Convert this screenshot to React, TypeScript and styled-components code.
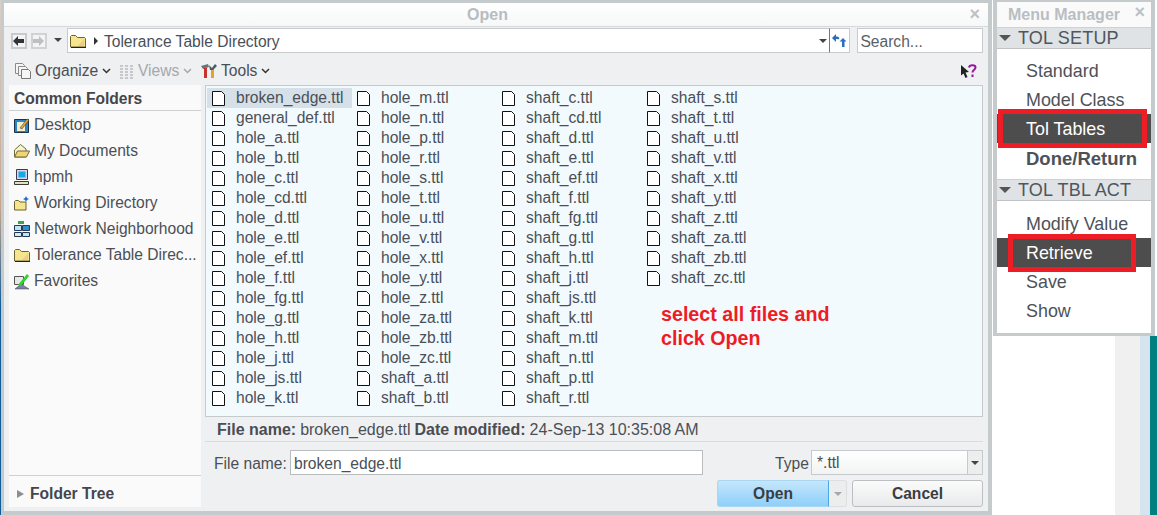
import React from "react";
import styled, { createGlobalStyle } from "styled-components";

const GlobalStyle = createGlobalStyle`
  html, body {
    margin: 0;
    padding: 0;
    background: #fff;
    overflow: hidden;
  }
  body {
    font-family: "Liberation Sans", Arial, sans-serif;
    font-size: 15.6px;
    color: #4a4f56;
  }
  * {
    box-sizing: border-box;
  }
`;

const Page = styled.div`
  display: flex;
  width: 1157px;
  height: 515px;
  overflow: hidden;
`;

const LeftEdge = styled.div`
  width: 1px;
  background: linear-gradient(180deg, #d8d0c8 0%, #c9a58a 40%, #0b5d9c 60%, #0b5d9c 100%);
`;

const Dialog = styled.div`
  display: flex;
  flex-direction: column;
  width: 991px;
  height: 515px;
  border: solid #c5cacd;
  border-width: 3px 4px 4px 3px;
  background: #eff0f2;
`;

const TitleBar = styled.div`
  position: relative;
  display: flex;
  justify-content: center;
  align-items: center;
  height: 24px;
  padding-right: 17px;
  flex: none;
  font-size: 16px;
  font-weight: bold;
  color: #b7bcc1;
  background: linear-gradient(180deg, #ffffff, #f6f7f7);
  border-bottom: 1px solid #d6d9db;
`;

const CloseMark = styled.span`
  position: absolute;
  right: 8px;
  top: 1px;
  font-size: 18px;
  font-weight: bold;
  color: #bcc1c5;
`;

const NavRow = styled.div`
  display: flex;
  align-items: center;
  height: 30px;
  flex: none;
  padding: 1px 5px 4px 7px;
`;

const NavButton = styled.div<{ $dim?: boolean }>`
  display: flex;
  align-items: center;
  justify-content: center;
  width: 16px;
  height: 16px;
  margin-right: 4px;
  background: #f4f4f4;
  border: 2px solid ${(p) => (p.$dim ? "#d0d3d5" : "#c8cbce")};
`;

const DropCaret = styled.div`
  width: 0;
  height: 0;
  border-left: 4px solid transparent;
  border-right: 4px solid transparent;
  border-top: 4px solid #444;
  margin: 0 5px 2px 3px;
`;

const AddressBar = styled.div`
  display: flex;
  align-items: center;
  width: 766px;
  height: 25px;
  padding-left: 2px;
  background: #fff;
  border: 1px solid #c8cbce;
  border-right: 1px solid #777;
`;

const Crumb = styled.span`
  margin-left: 6px;
  padding-top: 2px;
  color: #4a5058;
`;

const RightArrow = styled.div`
  width: 0;
  height: 0;
  margin-left: 8px;
  border-top: 4px solid transparent;
  border-bottom: 4px solid transparent;
  border-left: 4px solid #333;
`;

const AddressCaret = styled(DropCaret)`
  margin: 0 2px 0 auto;
`;

const RefreshButton = styled.div`
  display: flex;
  align-items: center;
  justify-content: center;
  width: 20px;
  height: 25px;
  background: #fff;
  border: 1px solid #c8cbce;
  border-left: none;
`;

const SearchBox = styled.div`
  display: flex;
  align-items: center;
  width: 126px;
  height: 25px;
  margin-left: 7px;
  padding: 2px 0 0 2px;
  background: #fff;
  border: 1px solid #c8cbce;
  color: #5a5f65;
`;

const Toolbar = styled.div`
  display: flex;
  align-items: center;
  height: 28px;
  flex: none;
  padding: 0 11px;
`;

const ToolItem = styled.div<{ $dim?: boolean; $width: number }>`
  display: flex;
  align-items: center;
  gap: 4px;
  width: ${(p) => p.$width}px;
  color: ${(p) => (p.$dim ? "#a4a8ac" : "#4a4f56")};
`;

const HelpSlot = styled.div`
  margin-left: auto;
  display: flex;
`;

const Body = styled.div`
  display: flex;
  gap: 4px;
  height: 422px;
  padding: 0 5px;
  flex: none;
`;

const Sidebar = styled.div`
  display: flex;
  flex-direction: column;
  width: 192px;
  background: #fafafa;
`;

const SidebarHead = styled.div`
  height: 26px;
  padding: 5px 0 0 5px;
  font-weight: bold;
  color: #43474c;
  border-bottom: 1px solid #cdd0d2;
`;

const Places = styled.div`
  display: flex;
  flex-direction: column;
  flex: 1;
  padding-top: 1px;
`;

const Place = styled.div`
  display: flex;
  align-items: center;
  height: 26px;
  gap: 4px;
  padding-left: 5px;
  white-space: nowrap;
`;

const TreeToggle = styled.div`
  display: flex;
  align-items: center;
  height: 32px;
  gap: 6px;
  padding: 4px 0 0 8px;
  font-weight: bold;
  color: #43474c;
  border-top: 1px solid #cdd0d2;
`;

const TreeArrow = styled.div`
  width: 0;
  height: 0;
  border-top: 4px solid transparent;
  border-bottom: 4px solid transparent;
  border-left: 7px solid #8c8f92;
`;

const Main = styled.div`
  display: flex;
  flex-direction: column;
  width: 778px;
`;

const FileList = styled.div`
  position: relative;
  display: grid;
  grid-auto-flow: column;
  grid-template-rows: repeat(16, 20px);
  grid-auto-columns: 145px;
  justify-content: start;
  align-content: start;
  height: 333px;
  padding: 2px 1px;
  background: #f3fafe;
  border: 1px solid #c5cacd;
`;

const FileRow = styled.div<{ $selected?: boolean }>`
  display: flex;
  align-items: center;
  gap: 11px;
  padding-left: 5px;
  height: 20px;
  white-space: nowrap;
  background: ${(p) => (p.$selected ? "#d5e0e8" : "transparent")};
`;

const Annotation = styled.div`
  position: absolute;
  left: 455px;
  top: 216px;
  font-size: 19.7px;
  font-weight: bold;
  line-height: 24px;
  color: #ee1c25;
`;

const InfoBar = styled.div`
  display: flex;
  align-items: center;
  height: 25px;
  padding: 2px 0 0 12px;
  gap: 4px;
  flex: none;
  font-size: 16px;
  border-bottom: 1px solid #d9dbdd;
`;

const InfoKey = styled.b`
  color: #4a4d52;
`;

const FormRow = styled.div`
  display: flex;
  align-items: center;
  height: 38px;
  padding: 3px 0 0 9px;
  flex: none;
`;

const FieldLabel = styled.span`
  width: 76px;
  padding-top: 3px;
  flex: none;
`;

const NameInput = styled.div`
  display: flex;
  align-items: center;
  width: 413px;
  height: 25px;
  padding: 2px 0 0 3px;
  background: #fff;
  border: 1px solid #b9bcbf;
`;

const TypeLabel = styled.span`
  margin-left: 72px;
  width: 36px;
  padding-top: 3px;
  flex: none;
`;

const TypeSelect = styled.div`
  display: flex;
  align-items: center;
  width: 172px;
  height: 25px;
  padding-left: 5px;
  background: linear-gradient(180deg, #ffffff, #f2f3f4);
  border: 1px solid #c5cacd;
`;

const SelectCaretCell = styled.div`
  display: flex;
  align-items: center;
  justify-content: center;
  width: 15px;
  height: 23px;
  margin-left: auto;
  border-left: 1px solid #c5cacd;
  background: #eceded;
`;

const TypeCaret = styled(DropCaret)`
  margin: 0;
`;

const ButtonRow = styled.div`
  display: flex;
  justify-content: flex-end;
  height: 27px;
  flex: none;
`;

const OpenButton = styled.div`
  display: flex;
  align-items: center;
  justify-content: center;
  width: 112px;
  font-weight: bold;
  color: #3a3d41;
  background: linear-gradient(180deg, #c5e6fb, #8ed0fa);
  border: 1px solid #a9d6f2;
  border-right: 1px solid #4aa7e3;
  border-radius: 3px 0 0 3px;
`;

const OpenCaretCell = styled.div`
  display: flex;
  align-items: center;
  justify-content: center;
  width: 18px;
  background: #eceded;
  border: 1px solid #dcdee0;
  border-left: none;
  border-radius: 0 3px 3px 0;
`;

const FaintCaret = styled(DropCaret)`
  margin: 0;
  border-top-color: #a5a8ab;
`;

const CancelButton = styled.div`
  display: flex;
  align-items: center;
  justify-content: center;
  width: 131px;
  margin-left: 5px;
  font-weight: bold;
  color: #3a3d41;
  background: linear-gradient(180deg, #fbfbfb, #e9eaeb);
  border: 1px solid #bcbfc2;
  border-radius: 3px;
`;

const RightColumn = styled.div`
  display: flex;
  flex-direction: column;
  width: 165px;
  padding-left: 1px;
`;

const Menu = styled.div`
  display: flex;
  flex-direction: column;
  width: 162px;
  height: 336px;
  flex: none;
  background: #f2f3f4;
  border: solid #c5cacd;
  border-width: 2px 4px 3px 4px;
`;

const MenuTitle = styled.div`
  position: relative;
  display: flex;
  align-items: center;
  height: 25px;
  flex: none;
  padding-left: 11px;
  font-size: 16px;
  font-weight: bold;
  color: #b9bec3;
  background: #fafafa;
`;

const MenuClose = styled(CloseMark)`
  right: 6px;
  top: 0;
`;

const MenuHead = styled.div`
  display: flex;
  align-items: center;
  gap: 7px;
  height: 22px;
  flex: none;
  padding-left: 2px;
  font-size: 18px;
  letter-spacing: 0.2px;
  color: #50565c;
  background: #dfe3e5;
  border-top: 1px solid #cfd2d4;
  border-bottom: 1px solid #bfc3c6;
`;

const HeadCaret = styled.div`
  width: 0;
  height: 0;
  border-left: 6px solid transparent;
  border-right: 6px solid transparent;
  border-top: 6px solid #555;
`;

const MenuGroup = styled.div<{ $height: number; $top: number }>`
  display: flex;
  flex-direction: column;
  height: ${(p) => p.$height}px;
  padding-top: ${(p) => p.$top}px;
  background: #fff;
  flex: none;
`;

const MenuItem = styled.div<{ $active?: boolean; $bold?: boolean }>`
  position: relative;
  display: flex;
  align-items: center;
  height: 29px;
  flex: none;
  padding: 2px 0 0 29px;
  font-size: ${(p) => (p.$bold ? "18.5px" : "17.9px")};
  font-weight: ${(p) => (p.$bold ? "bold" : "normal")};
  color: ${(p) => (p.$active ? "#fff" : "#4d5258")};
  background: ${(p) => (p.$active ? "#4d4d4d" : "transparent")};
`;

const RedBox = styled.div<{ $left: number; $width: number; $top: number; $height: number }>`
  position: absolute;
  left: ${(p) => p.$left}px;
  top: ${(p) => p.$top}px;
  width: ${(p) => p.$width}px;
  height: ${(p) => p.$height}px;
  border: 5px solid #ee1c25;
`;

const BehindMenu = styled.div`
  display: flex;
  flex: 1;
`;

const BehindWhite = styled.div`
  width: 122px;
  background: #fff;
`;

const BehindGrey = styled.div`
  width: 25px;
  background: #f0f0f0;
`;

const BehindBlue = styled.div`
  width: 10px;
  background: #d6e4f0;
`;

const BehindTeal = styled.div`
  flex: 1;
  background: #008080;
`;

const Doc = () => (
  <svg width="13" height="15" viewBox="0 0 13 15">
    <path d="M.5.5h9l3 3v11H.5z" fill="#fff" stroke="#111" />
  </svg>
);

const FolderIcon = () => (
  <svg width="16" height="14" viewBox="0 0 16 14">
    <path d="M.5 13V2.500l1-1h4l2 2h7l1 1V13z" fill="#f6e58f" stroke="#6b6430" />
    <path d="M8 12l6-7v7z" fill="#f3c98b" />
    <path d="M1 13.500h15" stroke="#222" />
  </svg>
);

const BackArrow = ({ color }: { color: string }) => (
  <svg width="11" height="10" viewBox="0 0 11 10">
    <path d="M0 5l5-5v3h6v4H5v3z" fill={color} />
  </svg>
);

const ForwardArrow = ({ color }: { color: string }) => (
  <svg width="11" height="10" viewBox="0 0 11 10">
    <path d="M11 5L6 0v3H0v4h6v3z" fill={color} />
  </svg>
);

const RefreshIcon = () => (
  <svg width="15" height="14" viewBox="0 0 15 14">
    <path d="M0 4l4-4v2.500c2 0 3 .5 3.500 2L6 5.500C5.500 5 5 5 4 5v3z" fill="#2a6fb8" />
    <path d="M14.500 7.500L11 4 7.500 7.500H10V13h2.500V7.500z" fill="#2a6fb8" />
  </svg>
);

const PagesIcon = () => (
  <svg width="16" height="16" viewBox="0 0 16 16">
    <path d="M.5.5h7l2 2v8h-9z" fill="#f5f5f5" stroke="#8a8a8a" />
    <path d="M3.500 3.500h7l2 2v7h-9z" fill="#f5f5f5" stroke="#8a8a8a" />
    <path d="M6.500 6.500h7l2 2v7h-9z" fill="#f5f5f5" stroke="#777" />
  </svg>
);

const ViewsIcon = () => (
  <svg width="15" height="15" viewBox="0 0 15 15">
    <path
      d="M1 2h3M6 2h3M11 2h3M1 5h3M6 5h3M11 5h3M1 8h3M6 8h3M11 8h3M1 11h3M6 11h3M11 11h3M1 14h3M6 14h3M11 14h3"
      stroke="#c6c9cb"
      strokeWidth="2"
    />
  </svg>
);

const ToolsIcon = () => (
  <svg width="16" height="16" viewBox="0 0 16 16">
    <path d="M0 3l7-2 1 3-6 2z" fill="#6c7378" />
    <path d="M3 5h3v10H3z" fill="#c9342a" />
    <path d="M10 6h3v9h-3z" fill="#e2a52b" />
    <path d="M8 2l3 3 3-4 2 2-4 4H9z" fill="#4a5a66" />
  </svg>
);

const Chevron = ({ color = "#333" }: { color?: string }) => (
  <svg width="9" height="6" viewBox="0 0 9 6">
    <path d="M1 1l3.500 3.500L8 1" fill="none" stroke={color} strokeWidth="1.500" />
  </svg>
);

const HelpIcon = () => (
  <svg width="16" height="15" viewBox="0 0 16 15">
    <path d="M0 1l8 7-3.500.5 2 4.500-2 1-2-4.500-2.500 2z" fill="#222" />
    <path d="M8 3.500C8.500.5 14.500.5 14.500 3.500c0 2.500-3 2-3 5" fill="none" stroke="#93159b" strokeWidth="2" />
    <path d="M10.500 10.500h2v2.500h-2z" fill="#93159b" />
  </svg>
);

const DesktopIcon = () => (
  <svg width="16" height="16" viewBox="0 0 16 16">
    <path d="M.5 2.500h14v13H.5z" fill="#2e86c1" stroke="#16324d" />
    <path d="M3 5h8v9H3z" fill="#f6efcb" />
    <path d="M6 11l7-9 2 1-7 9z" fill="#e9a23b" stroke="#333" strokeWidth=".5" />
  </svg>
);

const DocsIcon = () => (
  <svg width="16" height="14" viewBox="0 0 16 14">
    <path d="M.5 13V6l6-5.500L12 5v8z" fill="#f8f3d0" stroke="#6f6a3a" />
    <path d="M.5 13l3-6h12l-3 6z" fill="#f2d573" stroke="#6f6a3a" />
  </svg>
);

const ComputerIcon = () => (
  <svg width="16" height="17" viewBox="0 0 16 17">
    <path d="M2.500.5h11v10h-11z" fill="#d8d8e8" stroke="#3a3a55" />
    <path d="M4.500 2.500h7v6h-7z" fill="#1aa7e8" />
    <path d="M.5 12.500h14v3H.5z" fill="#e3dfc0" stroke="#3a3a35" />
  </svg>
);

const WorkingIcon = () => (
  <svg width="16" height="15" viewBox="0 0 16 15">
    <path d="M.5 14V5.500l1-1h3l1.500 1.500h6v8z" fill="#f6e58f" stroke="#6b6430" />
    <path d="M12 0l1 2 2 1-2 1-1 2-1-2-2-1 2-1z" fill="#1a6fc9" />
  </svg>
);

const NetworkIcon = () => (
  <svg width="16" height="16" viewBox="0 0 16 16">
    <path d="M4 0h6v3H4z" fill="#3fa34d" />
    <path d="M.5 4.500h7v5h-7z" fill="#bfe3f5" stroke="#223a55" />
    <path d="M8.500 4.500h7v5h-7z" fill="#2f8fd0" stroke="#223a55" />
    <path d="M.5 11.500h7v4h-7z" fill="#dfe7ee" stroke="#223a55" />
    <path d="M8.500 11.500h7v4h-7z" fill="#bfe3f5" stroke="#223a55" />
  </svg>
);

const FavoritesIcon = () => (
  <svg width="16" height="17" viewBox="0 0 16 17">
    <path d="M.5 3.500h9v8h-9z" fill="#e8e8e8" stroke="#555" />
    <path d="M1 16l6-5 8 5z" fill="#7d7fa8" stroke="#444" strokeWidth=".5" />
    <path d="M4 12L13 1l2 2-8 10z" fill="#2fd02f" />
  </svg>
);

const places = [
  { name: "Desktop", icon: <DesktopIcon /> },
  { name: "My Documents", icon: <DocsIcon /> },
  { name: "hpmh", icon: <ComputerIcon /> },
  { name: "Working Directory", icon: <WorkingIcon /> },
  { name: "Network Neighborhood", icon: <NetworkIcon /> },
  { name: "Tolerance Table Direc...", icon: <FolderIcon /> },
  { name: "Favorites", icon: <FavoritesIcon /> },
];

const fits = "a b c cd d e ef f fg g h j js k m n p r s t u v x y z za zb zc".split(" ");

const files = [
  "broken_edge.ttl",
  "general_def.ttl",
  ...fits.map((h) => `hole_${h}.ttl`),
  ...fits.map((s) => `shaft_${s}.ttl`),
];

const App = () => {
  return (
    <Page>
      <GlobalStyle />
      <LeftEdge />
      <Dialog>
        <TitleBar>
          Open
          <CloseMark>×</CloseMark>
        </TitleBar>
        <NavRow>
          <NavButton>
            <BackArrow color="#333" />
          </NavButton>
          <NavButton $dim>
            <ForwardArrow color="#bdbfc1" />
          </NavButton>
          <DropCaret />
          <AddressBar>
            <FolderIcon />
            <RightArrow />
            <Crumb>Tolerance Table Directory</Crumb>
            <AddressCaret />
          </AddressBar>
          <RefreshButton>
            <RefreshIcon />
          </RefreshButton>
          <SearchBox>Search...</SearchBox>
        </NavRow>
        <Toolbar>
          <ToolItem $width={104}>
            <PagesIcon />
            Organize
            <Chevron />
          </ToolItem>
          <ToolItem $dim $width={82}>
            <ViewsIcon />
            Views
            <Chevron color="#a4a8ac" />
          </ToolItem>
          <ToolItem $width={80}>
            <ToolsIcon />
            Tools
            <Chevron />
          </ToolItem>
          <HelpSlot>
            <HelpIcon />
          </HelpSlot>
        </Toolbar>
        <Body>
          <Sidebar>
            <SidebarHead>Common Folders</SidebarHead>
            <Places>
              {places.map((p) => (
                <Place key={p.name}>
                  {p.icon}
                  {p.name}
                </Place>
              ))}
            </Places>
            <TreeToggle>
              <TreeArrow />
              Folder Tree
            </TreeToggle>
          </Sidebar>
          <Main>
            <FileList>
              {files.map((f, i) => (
                <FileRow key={f} $selected={i === 0}>
                  <Doc />
                  {f}
                </FileRow>
              ))}
              <Annotation>
                select all files and
                <br />
                click Open
              </Annotation>
            </FileList>
            <InfoBar>
              <InfoKey>File name:</InfoKey> broken_edge.ttl <InfoKey>Date modified:</InfoKey> 24-Sep-13 10:35:08 AM
            </InfoBar>
            <FormRow>
              <FieldLabel>File name:</FieldLabel>
              <NameInput>broken_edge.ttl</NameInput>
              <TypeLabel>Type</TypeLabel>
              <TypeSelect>
                *.ttl
                <SelectCaretCell>
                  <TypeCaret />
                </SelectCaretCell>
              </TypeSelect>
            </FormRow>
            <ButtonRow>
              <OpenButton>Open</OpenButton>
              <OpenCaretCell>
                <FaintCaret />
              </OpenCaretCell>
              <CancelButton>Cancel</CancelButton>
            </ButtonRow>
          </Main>
        </Body>
      </Dialog>
      <RightColumn>
        <Menu>
          <MenuTitle>
            Menu Manager
            <MenuClose>×</MenuClose>
          </MenuTitle>
          <MenuHead>
            <HeadCaret />
            TOL SETUP
          </MenuHead>
          <MenuGroup $height={130} $top={7}>
            <MenuItem>Standard</MenuItem>
            <MenuItem>Model Class</MenuItem>
            <MenuItem $active>
              Tol Tables
              <RedBox $left={1} $width={149} $top={-5} $height={39} />
            </MenuItem>
            <MenuItem $bold>Done/Return</MenuItem>
          </MenuGroup>
          <MenuHead>
            <HeadCaret />
            TOL TBL ACT
          </MenuHead>
          <MenuGroup $height={132} $top={8}>
            <MenuItem>Modify Value</MenuItem>
            <MenuItem $active>
              Retrieve
              <RedBox $left={11} $width={128} $top={-4} $height={38} />
            </MenuItem>
            <MenuItem>Save</MenuItem>
            <MenuItem>Show</MenuItem>
          </MenuGroup>
        </Menu>
        <BehindMenu>
          <BehindWhite />
          <BehindGrey />
          <BehindBlue />
          <BehindTeal />
        </BehindMenu>
      </RightColumn>
    </Page>
  );
};

export default App;
